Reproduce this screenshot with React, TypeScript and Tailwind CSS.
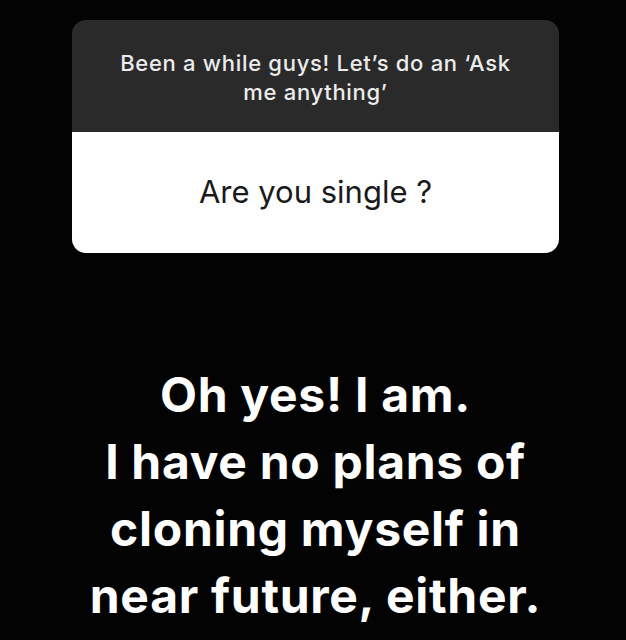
export default function App() {
  return (
    <div className="w-[626px] h-[640px] bg-[#030303] overflow-hidden flex flex-col" style={{ fontFamily: "Inter, 'Liberation Sans', sans-serif" }}>
      <div className="mt-[20px] ml-[72px] w-[487px] rounded-[14px] overflow-hidden flex flex-col">
        <div className="h-[112px] bg-[#2a2a2a] flex items-center justify-center px-[34px] pt-[4px]">
          <p className="text-center text-[22px] leading-[29px] font-medium tracking-[0.7px] text-[#ececec]">
            Been a while guys! Let’s do an ‘Ask me anything’
          </p>
        </div>
        <div className="h-[121px] bg-white flex items-center justify-center">
          <p className="text-[31px] text-[#1a1a1a]">Are you single ?</p>
        </div>
      </div>
      <div className="mt-[108px] ml-[5px] text-center text-white font-bold text-[48px] leading-[67px] tracking-[0.7px]">
        <p>Oh yes! I am.</p>
        <p>I have no plans of</p>
        <p>cloning myself in</p>
        <p>near future, either.</p>
      </div>
    </div>
  );
}
